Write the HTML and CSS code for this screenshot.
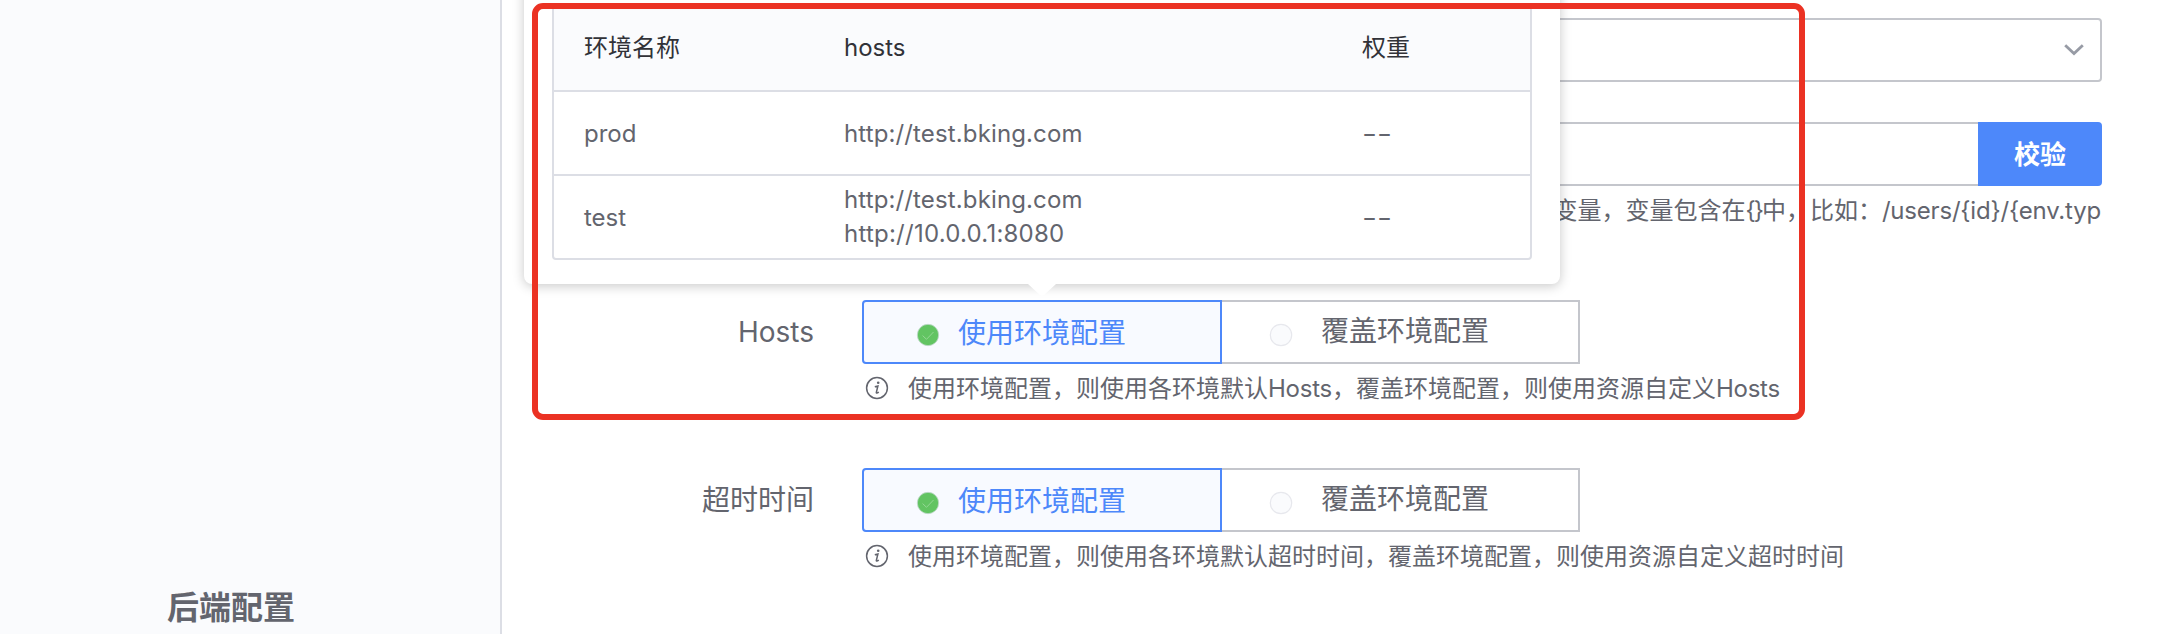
FILE: index.html
```html
<!DOCTYPE html>
<html lang="zh-CN">
<head>
<meta charset="utf-8">
<title>后端配置</title>
<link rel="stylesheet" href="styles.css">
</head>
<body>
<div class="page">
  <aside class="sidebar"><h2 class="section-title">后端配置</h2></aside>
  <main class="form">
    <div class="row row-select">
      <div class="select">
        <svg class="chevron" viewBox="0 0 20 12"><path d="M1.2 1.2 10 9.6 18.8 1.2"/></svg>
      </div>
    </div>
    <div class="row row-path">
      <div class="input-group"><div class="input"></div><button class="verify">校验</button></div>
      <p class="path-hint"><span>变量，变量包含在<span class="braces">{}</span>中，比如：</span><span class="path-example">/users/{id}/{env.typ</span></p>
    </div>
    <div class="row row-option">
      <label class="label">Hosts</label>
      <div class="control">
        <div class="switch">
          <div class="option active"><svg class="dot" viewBox="0 0 24 24"><circle class="dot-on" cx="12" cy="12" r="10.7"/><path class="check" d="M6.6 12.6 10.5 16.3 17.5 9"/></svg><span>使用环境配置</span></div>
          <div class="option"><svg class="dot" viewBox="0 0 24 24"><circle class="dot-off" cx="12" cy="12" r="10.7"/></svg><span>覆盖环境配置</span></div>
        </div>
        <p class="hint"><svg class="info" viewBox="0 0 24 24"><circle cx="12" cy="12" r="10.4"/><circle class="info-dot" cx="13.2" cy="6.8" r="1.3"/><path d="M9.8 10.8 12.9 10 11.3 16.6Q11.2 17.8 13.8 16.2"/></svg><span>使用环境配置，则使用各环境默认<span class="latin">Hosts</span>，覆盖环境配置，则使用资源自定义<span class="latin">Hosts</span></span></p>
      </div>
    </div>
    <div class="row row-option">
      <label class="label">超时时间</label>
      <div class="control">
        <div class="switch">
          <div class="option active"><svg class="dot" viewBox="0 0 24 24"><circle class="dot-on" cx="12" cy="12" r="10.7"/><path class="check" d="M6.6 12.6 10.5 16.3 17.5 9"/></svg><span>使用环境配置</span></div>
          <div class="option"><svg class="dot" viewBox="0 0 24 24"><circle class="dot-off" cx="12" cy="12" r="10.7"/></svg><span>覆盖环境配置</span></div>
        </div>
        <p class="hint"><svg class="info" viewBox="0 0 24 24"><circle cx="12" cy="12" r="10.4"/><circle class="info-dot" cx="13.2" cy="6.8" r="1.3"/><path d="M9.8 10.8 12.9 10 11.3 16.6Q11.2 17.8 13.8 16.2"/></svg><span>使用环境配置，则使用各环境默认超时时间，覆盖环境配置，则使用资源自定义超时时间</span></p>
      </div>
    </div>
  </main>
  <div class="popover">
    <div class="table">
      <div class="tr th"><span>环境名称</span><span>hosts</span><span>权重</span></div>
      <div class="tr prod"><span>prod</span><span class="url">http://test.bking.com</span><span class="dash">--</span></div>
      <div class="tr"><span class="env">test</span><span class="url">http://test.bking.com<br><span class="address">http://10.0.0.1:8080</span></span><span class="dash env">--</span></div>
    </div>
    <svg class="arrow" viewBox="0 0 28 12"><path d="M0 0H28L16 11Q14 12.5 12 11Z"/></svg>
  </div>
  <div class="highlight"></div>
</div>
</body>
</html>
```
FILE: styles.css
```css
* { box-sizing: border-box; }
body { margin: 0; background: #fff; color: #63656e; font: 24px/34px Inter, "Noto Sans CJK SC", sans-serif; }
.page { position: relative; display: flex; width: 2164px; height: 634px; overflow: hidden; }
.sidebar { width: 502px; flex: none; display: flex; align-items: flex-end; padding: 0 0 3px 167px; background: #fafbfd; border-right: 2px solid #dcdee5; }
.section-title { margin: 0; font-size: 32px; line-height: 46px; font-weight: 700; }
.form { flex: none; width: 1600px; padding-top: 18px; }
.row-select, .row-path { padding-left: 360px; }
.select { height: 64px; border: 2px solid #c4c6cc; border-radius: 4px; display: flex; align-items: center; justify-content: flex-end; padding: 0 16px 0 0; }
.chevron { width: 20px; height: 12px; fill: none; stroke: #979ba5; stroke-width: 2.8; }
.row-path { margin-top: 40px; height: 178px; }
.input-group { display: flex; height: 64px; }
.input { flex: 1; border: 2px solid #c4c6cc; border-right: 0; border-radius: 4px 0 0 4px; }
.verify { width: 124px; border: 0; border-radius: 0 4px 4px 0; background: #4d88fa; color: #fff; font: 700 26px/62px "Noto Sans CJK SC", sans-serif; padding: 0 0 2px; }
.path-hint { margin: 8px 0 0; padding-right: 1px; display: flex; justify-content: flex-end; white-space: nowrap; }
.path-example { letter-spacing: -.2px; }
.braces { letter-spacing: -2px; }
.row-option { display: flex; gap: 48px; height: 168px; }
.label { width: 312px; text-align: right; font-size: 28px; line-height: 64px; }
.control { width: 1240px; }
.switch { display: flex; width: 718px; height: 64px; }
.option { display: flex; flex: 1; align-items: center; gap: 18px; padding: 0 0 2px 47px; border: 2px solid #c4c6cc; border-left: 0; font-size: 28px; }
.option.active { flex: none; width: 360px; border: 2px solid #4d88fa; border-radius: 4px 0 0 4px; background: #f8faff; color: #4d88fa; padding-left: 52px; }
.option.active span { padding-top: 4px; }
.option:not(.active) { gap: 28px; }
.dot { width: 24px; height: 24px; margin-top: 7px; }
.dot-on { fill: #62c462; stroke: #c5d9d0; stroke-width: .8; }
.dot-off { fill: #fafbfd; stroke: #e7e8ed; stroke-width: 1.2; }
.check { fill: none; stroke: #94d794; stroke-width: 1; }
.hint { margin: 8px 0 0; display: flex; align-items: center; gap: 19px; padding-left: 3px; white-space: nowrap; }
.hint .latin { letter-spacing: -.25px; }
.info { width: 24px; height: 24px; margin-top: -2px; fill: none; stroke: #63656e; stroke-width: 1.5; }
.info-dot { fill: #63656e; stroke: none; }
.popover { position: absolute; left: 524px; top: -20px; width: 1036px; height: 304px; padding: 26px 28px 24px; background: #fff; border-radius: 8px; box-shadow: 0 2px 12px rgba(0, 0, 0, .22); }
.table { height: 254px; border: 2px solid #dcdee5; border-radius: 4px; overflow: hidden; }
.tr { display: grid; grid-template-columns: 260px 518px 1fr; align-items: center; height: 84px; padding-left: 30px; border-top: 2px solid #dcdee5; }
.tr.th { border-top: 0; height: 82px; padding-bottom: 2px; background: #fafbfd; color: #313238; }
.tr.prod { padding-top: 2px; }
.env { padding-top: 2px; }
.url { letter-spacing: .13px; }
.address { letter-spacing: .24px; }
.dash { justify-self: start; transform: scaleX(1.36); transform-origin: left; }
.arrow { position: absolute; left: 504px; top: 304px; width: 28px; height: 12px; fill: #fff; }
.highlight { position: absolute; left: 532px; top: 3px; width: 1273px; height: 417px; border: 6px solid #eb3223; border-radius: 11px; }
```
